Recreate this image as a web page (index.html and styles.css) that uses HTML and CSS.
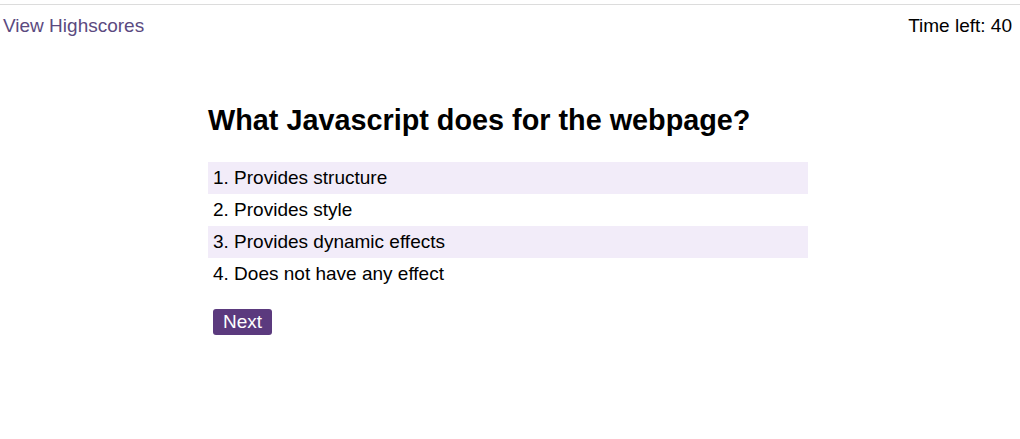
FILE: index.html
```html
<!DOCTYPE html>
<html>
<head>
<meta charset="utf-8">
<link rel="stylesheet" href="styles.css">
</head>
<body>
<header class="topbar">
  <a class="highscores" href="#">View Highscores</a>
  <span class="timer">Time left: 40</span>
</header>
<main class="quiz">
  <h1 class="question">What Javascript does for the webpage?</h1>
  <ul class="choices">
    <li class="choice shaded">1. Provides structure</li>
    <li class="choice">2. Provides style</li>
    <li class="choice shaded">3. Provides dynamic effects</li>
    <li class="choice">4. Does not have any effect</li>
  </ul>
  <button class="next">Next</button>
</main>
</body>
</html>
```
FILE: styles.css
```css
html, body {
  margin: 0;
  padding: 0;
  background: #fff;
}
body {
  font-family: "Liberation Sans", Arial, sans-serif;
  color: #000;
  padding-top: 4px;
}
.topbar {
  border-top: 1px solid #dcdcdc;
  display: flex;
  justify-content: space-between;
  align-items: baseline;
  padding: 10px 8px 0 3px;
  font-size: 19px;
  line-height: 21px;
}
.highscores {
  color: #5b4a80;
  text-decoration: none;
}
.timer {
  color: #000;
}
.quiz {
  width: 600px;
  margin: 0 0 0 208px;
}
.question {
  font-size: 28.8px;
  font-weight: bold;
  line-height: 32px;
  margin: 68px 0 0 0;
}
.choices {
  list-style: none;
  margin: 26px 0 0 0;
  padding: 0;
}
.choice {
  height: 32px;
  line-height: 32px;
  font-size: 19px;
  padding-left: 5px;
}
.shaded {
  background: #f2ecf9;
}
.next {
  display: block;
  margin: 19px 0 0 5px;
  background: #5b3a7e;
  color: #fff;
  border: none;
  border-radius: 3px;
  font-family: "Liberation Sans", Arial, sans-serif;
  font-size: 19px;
  line-height: 26px;
  height: 26px;
  padding: 0 10px;
}
```
